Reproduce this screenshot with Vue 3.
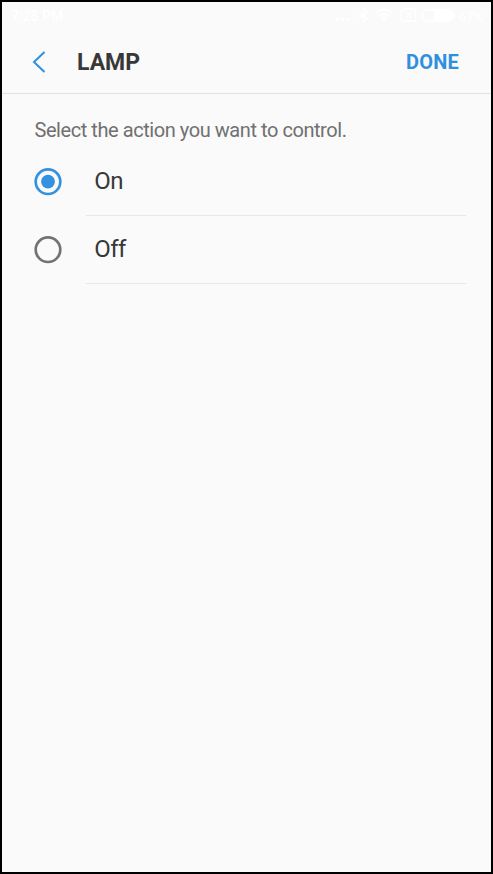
<script setup>
import { ref } from 'vue'

const options = ['On', 'Off']
const selected = ref('On')
</script>

<template>
  <main class="screen">
    <div class="status">
      <span class="time">7:28 PM</span>
      <div class="indicators">
        <svg width="122" height="18" viewBox="0 0 122 18" fill="none" stroke="#fff" stroke-width="1.3">
          <g fill="#fff" stroke="none">
            <circle cx="2.500" cy="13.500" r="1.800" /><circle cx="7.800" cy="13.500" r="1.800" /><circle cx="13" cy="13.500" r="1.800" />
            <circle cx="49" cy="14" r="1.600" />
          </g>
          <path d="M24 6l8 6.500-4 3.500V2.500l4 3.500-8 6.500" />
          <path d="M41 7q8-7 16 0M44 10q5-4.500 10 0M46 12.500q3-2 6 0" stroke-width="1.800" />
          <path d="M69 3h9q2.500 0 2.500 2.500V15H66V6zM71 6.500l5 5M76 6.500l-5 5" />
          <rect x="87" y="3.500" width="31.500" height="11.500" rx="5.700" />
          <path d="M99 4h14q5.500 0 5.500 5.300T113 15H99z" fill="#fff" stroke="none" />
          <path d="M120 7.500v4" />
        </svg>
        <span class="percent">67%</span>
      </div>
    </div>
    <header class="bar">
      <button class="back" aria-label="Back">
        <svg width="14" height="24" viewBox="0 0 14 24" fill="none" stroke="#2f90de" stroke-width="2">
          <path d="M12.500 2L2 12l10.500 10" />
        </svg>
      </button>
      <h1>LAMP</h1>
      <button class="done">DONE</button>
    </header>
    <p class="hint">Select the action you want to control.</p>
    <div class="options" role="radiogroup">
      <div v-for="option in options" :key="option" class="option" role="radio" :aria-checked="selected === option" @click="selected = option">
        <svg class="radio" :class="{ checked: selected === option }" width="28" height="28" viewBox="0 0 28 28">
          <circle class="ring" cx="14" cy="13.700" r="12.300" />
          <circle v-if="selected === option" class="dot" cx="14" cy="13.700" r="6.900" />
        </svg>
        <span class="label">{{ option }}</span>
      </div>
    </div>
  </main>
</template>

<style>
body { background: #fafafa; }
</style>

<style scoped>
.screen {
  box-sizing: border-box;
  width: 493px;
  height: 874px;
  border: 2px solid #000;
  background: #fafafa;
  color: #383838;
  font-family: Roboto, sans-serif;
  overflow: hidden;
}
.status {
  display: flex;
  justify-content: space-between;
  height: 28px;
  padding: 4px 7px 0 9px;
  box-sizing: border-box;
  color: #fff;
  font-size: 14px;
  font-weight: 500;
  line-height: 21px;
}
.indicators { display: flex; width: 149px; }
.indicators svg { flex: none; }
.percent {
  padding-left: 2px;
  font-size: 13px;
}
.bar {
  display: flex;
  align-items: center;
  height: 64px;
  box-sizing: border-box;
  border-bottom: 1px solid #e2e2e2;
  padding: 0 32px 0 30px;
}
button {
  border: 0;
  padding: 0;
  background: none;
  font: inherit;
}
.back { display: flex; width: 45px; }
h1 {
  margin: 0;
  padding-top: 2px;
  font-size: 23px;
  line-height: 28px;
  font-weight: 700;
}
.done {
  margin-left: auto;
  color: #3090de;
  font-size: 20px;
  letter-spacing: 0.200px;
  line-height: 28px;
  font-weight: 700;
}
.hint {
  margin: 24px 0 0 32.500px;
  color: #707070;
  font-size: 20px;
  letter-spacing: -0.440px;
  line-height: 24px;
  white-space: nowrap;
}
.options { padding-top: 6px; }
.option {
  display: flex;
  align-items: center;
  height: 68px;
  padding: 0 25px 0 32px;
}
.radio { flex: none; margin-right: 24px; }
.ring { fill: none; stroke: #737373; stroke-width: 2.700; }
.checked .ring { stroke: #3391df; }
.dot { fill: #3391df; }
.label {
  flex: 1;
  height: 68px;
  box-sizing: border-box;
  padding-left: 8.300px;
  border-bottom: 1px solid #e7e7e7;
  font-size: 24px;
  letter-spacing: -0.600px;
  line-height: 66px;
}
</style>
